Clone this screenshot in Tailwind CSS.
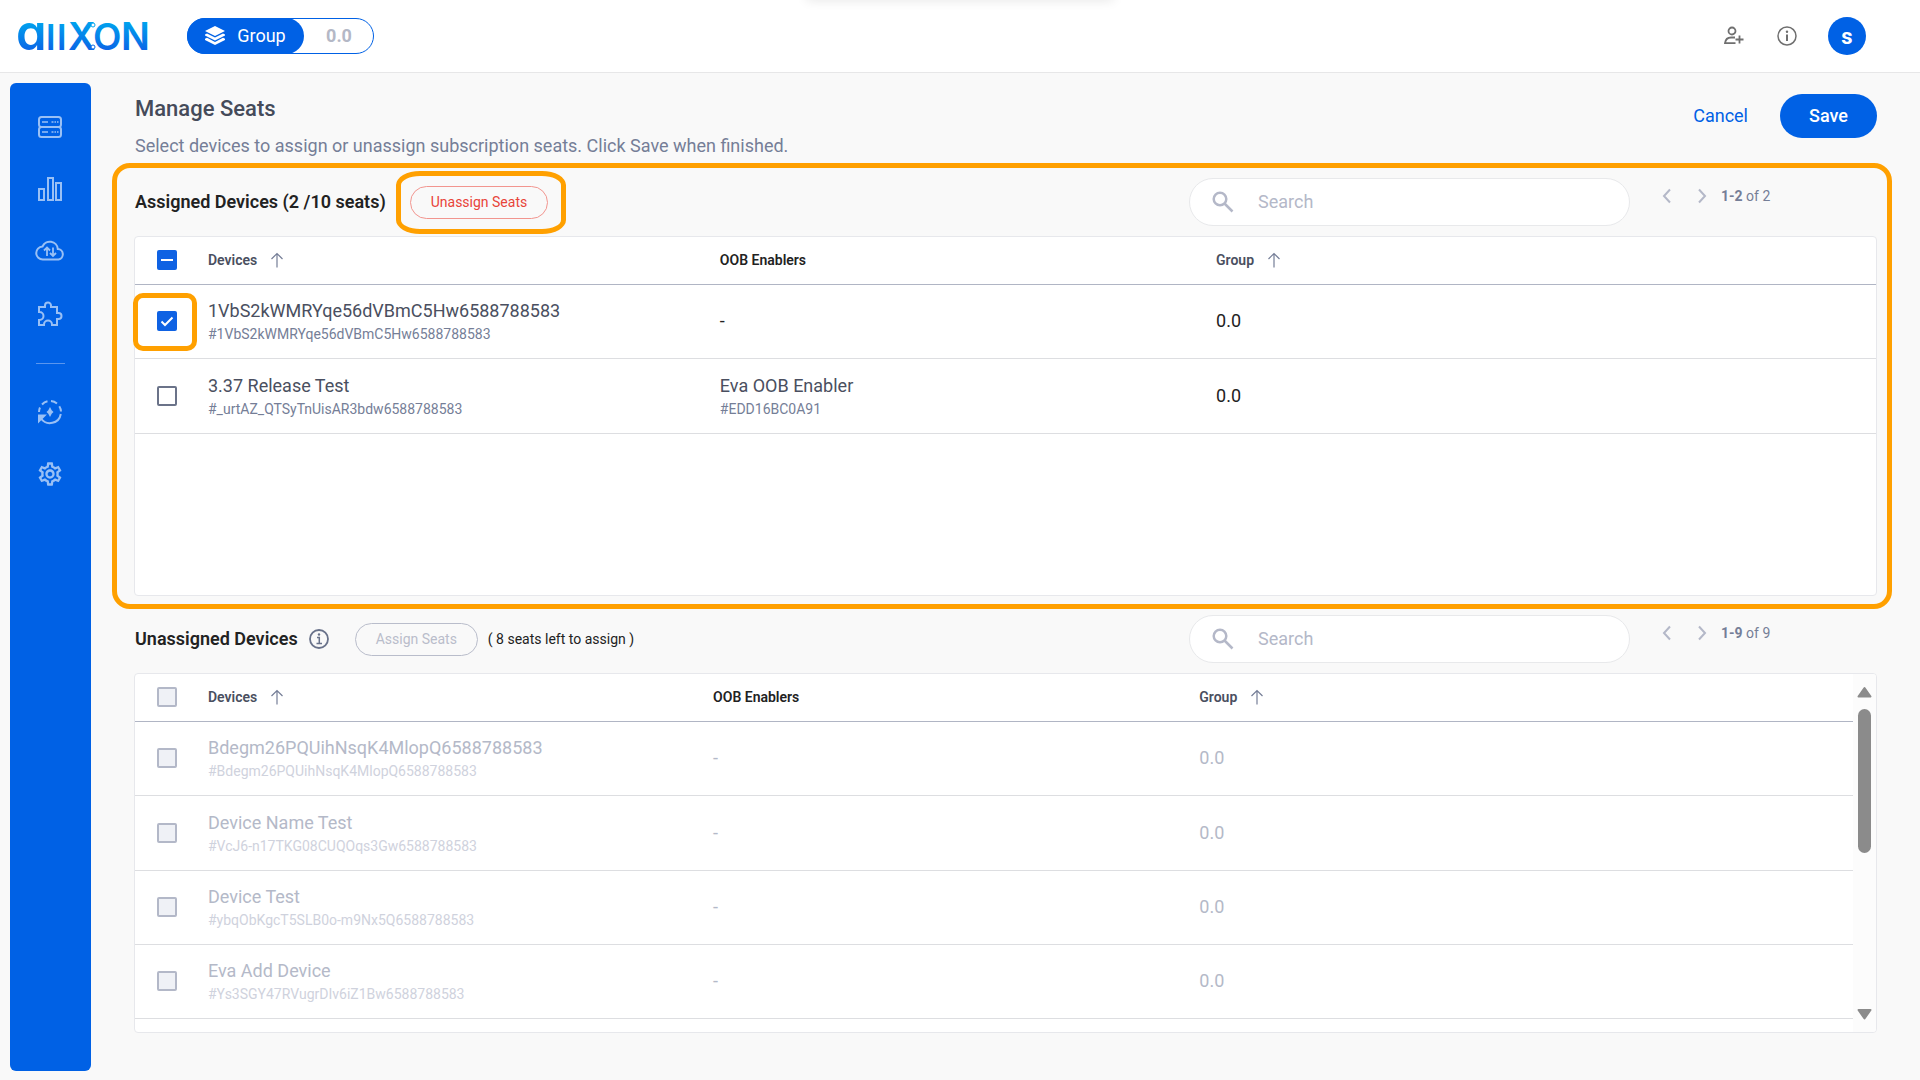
<!DOCTYPE html>
<html lang="en">
<head>
    <meta charset="UTF-8">
    <meta name="viewport" content="width=device-width, initial-scale=1.0">
    <title>Manage Seats</title>
    <script src="https://cdn.jsdelivr.net/npm/@tailwindcss/browser@4"></script>
</head>
<body class="bg-[#f9f9f9] font-[Roboto,sans-serif] text-[#222] min-h-screen flex flex-col">

    <!-- Top bar -->
    <header class="relative h-[73px] bg-white border-b border-[#e7e7e8] flex items-center pl-4 pr-[54px]">
        <div class="absolute -top-2 left-[42%] w-[16%] h-2 rounded shadow-[0_0_12px_rgba(0,0,0,0.12)]"></div>

        <a href="#" aria-label="allxon home">
            <svg width="140" height="72" viewBox="0 0 140 72" class="overflow-visible font-[Inter,sans-serif]">
                <defs>
                    <linearGradient id="logoFill" gradientUnits="userSpaceOnUse" x1="0" y1="22" x2="0" y2="50">
                        <stop offset="0" stop-color="#00a3ee"/>
                        <stop offset="1" stop-color="#0a66e6"/>
                    </linearGradient>
                </defs>
                <text y="50" fill="url(#logoFill)" font-weight="600"><tspan x="0" font-size="49" style="font-feature-settings:'cv11'">a</tspan><tspan x="30" font-size="36">l</tspan><tspan x="41" font-size="36">l</tspan><tspan x="52" font-size="38">X</tspan><tspan x="77" font-size="37">O</tspan><tspan x="105" font-size="38">N</tspan></text>
                <circle cx="77" cy="25" r="2" fill="#fff" stroke="#00a3ee" stroke-width="1"/>
                <circle cx="77" cy="47" r="2" fill="#fff" stroke="#0a66e6" stroke-width="1"/>
            </svg>
        </a>

        <div class="ml-[31px] h-9 w-[187px] rounded-full border border-[#0061e5] bg-white flex text-lg">
            <button class="-m-px h-9 w-[117px] rounded-full bg-[#0061e5] text-white flex items-center justify-center gap-3">
                <svg width="20" height="20" viewBox="0 0 20 20" fill="#fff">
                    <path d="M10 0l10 5-10 5L0 5z"/>
                    <path d="M0 8.400l2-1 8 4.200 8-4.200 2 1v1.200l-10 5-10-5z"/>
                    <path d="M0 12.800l2-1 8 4.200 8-4.200 2 1v1.200l-10 5-10-5z"/>
                </svg>
                Group
            </button>
            <button class="flex-1 pl-0.5 text-[#b4b8c6] font-bold">0.0</button>
        </div>

        <div class="ml-auto flex items-center">
            <button aria-label="Invite user">
                <svg width="20" height="20" viewBox="0 0 20 20" fill="none" stroke="#6f6f6f" stroke-width="1.800">
                    <circle cx="8" cy="5" r="3.500"/>
                    <path d="M11 11.500H7c-3.500 0-5.500 2-6 5.700h10.500M15.500 9.500v8M11.500 13.500h8"/>
                </svg>
            </button>
            <button aria-label="Information" class="ml-[33px]">
                <svg width="20" height="20" viewBox="0 0 20 20" fill="none" stroke="#6f6f6f" stroke-width="1.500">
                    <circle cx="10" cy="10" r="9"/>
                    <path d="M10 8.500v6.500" stroke-width="2"/>
                    <circle cx="10" cy="5.800" r="1.200" fill="#6f6f6f" stroke="none"/>
                </svg>
            </button>
            <button class="ml-[31px] size-[38px] rounded-full bg-[#0061e5] text-white text-[22px] font-bold">s</button>
        </div>
    </header>

    <div class="flex-1 flex">

        <!-- Sidebar -->
        <nav class="w-[81px] mt-2.5 ml-2.5 mb-[9px] pt-[30px] pr-px rounded-md bg-[#0061e5] text-[#99c0f5] flex flex-col items-center gap-[34px]">
            <a href="#" aria-label="Devices">
                <svg width="28" height="28" viewBox="0 0 28 28" fill="none" stroke="currentColor" stroke-width="2">
                    <rect x="3" y="4" width="22" height="10" rx="2.500"/>
                    <rect x="3" y="14" width="22" height="10" rx="2.500"/>
                    <path d="M6 9h6M15.500 9h2M18.500 9h1.500M21 9h1.500M6 19h6M15.500 19h2M18.500 19h1.500M21 19h1.500" stroke-width="1.300"/>
                </svg>
            </a>
            <a href="#" aria-label="Statistics">
                <svg width="28" height="28" viewBox="0 0 28 28" fill="none" stroke="currentColor" stroke-width="2">
                    <rect x="3" y="14" width="5" height="11"/>
                    <rect x="12" y="3" width="5" height="22"/>
                    <rect x="20" y="8" width="5" height="17"/>
                </svg>
            </a>
            <a href="#" aria-label="Cloud updates">
                <svg width="30" height="28" viewBox="0 0 30 28" fill="none" stroke="currentColor" stroke-width="2">
                    <path d="M8 22.500a6.500 6.500 0 0 1-.5-13A8 8 0 0 1 22.800 12a5.300 5.300 0 0 1 .7 10.500z"/>
                    <path d="M12 19v-8M9 13.500l3-3 3 3M18 10.500v8M15 16l3 3 3-3" stroke-width="1.800"/>
                </svg>
            </a>
            <a href="#" aria-label="Plugins" class="mt-0.5">
                <svg width="28" height="28" viewBox="-1 0 28 28" fill="none" stroke="currentColor" stroke-width="2">
                    <path d="M2 6H8V4.500a3 3 0 0 1 6 0V6H20V12h1.500a3 3 0 0 1 0 6H20V24H15v-.5a4 4 0 0 0-8 0V24H2V19h.5a4 4 0 0 0 0-8H2Z"/>
                </svg>
            </a>
            <hr class="w-[29px] border-[#5a96ee]">
            <a href="#" aria-label="Recovery">
                <svg width="28" height="28" viewBox="0 0 28 28" fill="none" stroke="currentColor" stroke-width="2">
                    <path d="M24.800 16A11 11 0 0 1 5 20.500"/>
                    <path d="M3 14a11 11 0 0 1 1-4.500M6 6.500A11 11 0 0 1 11.500 3.300M15 3a11 11 0 0 1 6 2.500M23.300 8.200A11 11 0 0 1 25 13.500"/>
                    <path d="M3 23v-5.500h5.500z" fill="currentColor"/>
                    <path d="M14 9l1.700 3.300L17.500 14l-1.800 1.700L14 19l-1.700-3.300L10.500 14l1.800-1.700z" fill="currentColor" stroke="none"/>
                </svg>
            </a>
            <a href="#" aria-label="Settings">
                <svg width="28" height="28" viewBox="0 0 24 24" fill="currentColor">
                    <path d="M19.430 12.980c.04-.32.07-.64.07-.98 0-.34-.03-.66-.07-.98l2.110-1.650c.19-.15.24-.42.12-.64l-2-3.460c-.09-.16-.26-.25-.44-.25-.06 0-.12.01-.17.03l-2.490 1c-.52-.4-1.080-.73-1.690-.98l-.38-2.650C14.460 2.180 14.250 2 14 2h-4c-.25 0-.46.18-.49.42l-.38 2.650c-.61.25-1.170.59-1.690.98l-2.490-1c-.06-.02-.12-.03-.18-.03-.17 0-.34.09-.43.25l-2 3.460c-.13.22-.07.49.12.64l2.110 1.650c-.04.32-.07.65-.07.98 0 .33.03.66.07.98l-2.110 1.650c-.19.15-.24.42-.12.64l2 3.460c.09.16.26.25.44.25.06 0 .12-.01.17-.03l2.490-1c.52.4 1.080.73 1.690.98l.38 2.650c.03.24.24.42.49.42h4c.25 0 .46-.18.49-.42l.38-2.650c.61-.25 1.170-.59 1.690-.98l2.490 1c.06.02.12.03.18.03.17 0 .34-.09.43-.25l2-3.460c.12-.22.07-.49-.12-.64l-2.110-1.650zm-1.980-1.710c.04.31.05.52.05.73 0 .21-.02.43-.05.73l-.14 1.130.89.7 1.080.84-.7 1.210-1.270-.51-1.040-.42-.9.68c-.43.32-.84.56-1.250.73l-1.060.43-.16 1.130-.2 1.350h-1.400l-.19-1.350-.16-1.130-1.060-.43c-.43-.18-.83-.41-1.230-.71l-.91-.7-1.060.43-1.270.51-.7-1.210 1.080-.84.89-.7-.14-1.130c-.03-.31-.05-.54-.05-.74s.02-.43.05-.73l.14-1.130-.89-.7-1.080-.84.7-1.210 1.270.51 1.040.42.9-.68c.43-.32.84-.56 1.250-.73l1.060-.43.16-1.130.2-1.350h1.390l.19 1.350.16 1.130 1.060.43c.43.18.83.41 1.230.71l.91.7 1.060-.43 1.270-.51.7 1.210-1.070.85-.89.7.14 1.130zM12 8c-2.210 0-4 1.790-4 4s1.790 4 4 4 4-1.790 4-4-1.790-4-4-4zm0 6c-1.100 0-2-.9-2-2s.9-2 2-2 2 .9 2 2-.9 2-2 2z"/>
                </svg>
            </a>
        </nav>

        <main class="flex-1 px-[43px] pt-5">

            <!-- Page title -->
            <div class="flex justify-between items-start pl-px">
                <div>
                    <h1 class="text-[22px] leading-8 font-medium text-[#454b5a]">Manage Seats</h1>
                    <p class="mt-[7px] text-lg leading-7 text-[#757e97]">Select devices to assign or unassign subscription seats. Click Save when finished.</p>
                </div>
                <div class="flex items-center gap-8 mt-px text-lg">
                    <button class="text-[#0061e5]">Cancel</button>
                    <button class="h-11 w-[97px] rounded-full bg-[#0061e5] text-white font-medium">Save</button>
                </div>
            </div>

            <!-- Assigned devices -->
            <section class="relative mt-[18px]">
                <div class="flex items-center h-12 pl-px">
                    <h2 class="text-lg font-semibold">Assigned Devices (2 /10 seats)</h2>
                    <div class="relative ml-6">
                        <button class="h-[33px] px-5 rounded-full border border-[#f2958f] text-sm text-[#e8443a] flex items-center">Unassign Seats</button>
                        <span class="absolute -left-3.5 -right-[18px] -inset-y-[15px] border-5 border-[#ffa000] rounded-[24px/14px] pointer-events-none"></span>
                    </div>
                    <label class="ml-auto w-[441px] h-12 rounded-full border border-[#e8e9eb] bg-white flex items-center pl-[22px]">
                        <svg width="22" height="22" viewBox="0 0 22 22" fill="none" stroke="#b4b8c8" stroke-width="2.500">
                            <circle cx="8" cy="8" r="6.300"/>
                            <path d="M12.500 12.500l8 8"/>
                        </svg>
                        <input type="text" placeholder="Search" aria-label="Search assigned devices" class="ml-6 flex-1 text-lg outline-none placeholder:text-[#b4b8c8]">
                    </label>
                    <div class="w-[247px] pl-8 mb-3 flex items-center text-[#757e97]">
                        <button aria-label="Previous page"><svg width="10" height="16" viewBox="0 0 10 16" fill="none" stroke="#b4b8c8" stroke-width="2"><path d="M8 1.500L2 8l6 6.500"/></svg></button>
                        <button aria-label="Next page" class="ml-[25px]"><svg width="10" height="16" viewBox="0 0 10 16" fill="none" stroke="#b4b8c8" stroke-width="2"><path d="M2 1.500L8 8l-6 6.500"/></svg></button>
                        <span class="ml-3.5 text-sm"><b>1-2</b> of 2</span>
                    </div>
                </div>

                <div class="mt-2.5 h-[360px] bg-white border border-[#e7e8ec] rounded">
                    <table class="w-full table-fixed text-left">
                        <thead>
                            <tr class="h-[47px] border-b border-[#b0b5c4] text-sm">
                                <th class="w-[73px] pl-[22px]">
                                    <label class="grid size-5">
                                        <input type="checkbox" aria-label="Select all assigned devices" class="col-start-1 row-start-1 appearance-none size-5 rounded-xs bg-[#0f62e3]">
                                        <svg class="col-start-1 row-start-1" width="20" height="20" viewBox="0 0 20 20" stroke="#fff" stroke-width="2"><path d="M4 10h12"/></svg>
                                    </label>
                                </th>
                                <th class="w-[29.4%] font-semibold text-[#4a4f60]">
                                    <button class="flex items-center gap-3.5">Devices
                                        <svg width="12" height="16" viewBox="0 0 12 16" fill="none" stroke="#757e97" stroke-width="1.200"><path d="M6 15.500V1.500M.5 7L6 1.500 11.500 7"/></svg>
                                    </button>
                                </th>
                                <th class="w-[28.5%] font-semibold">OOB Enablers</th>
                                <th class="font-semibold text-[#4a4f60]">
                                    <button class="flex items-center gap-3.5">Group
                                        <svg width="12" height="16" viewBox="0 0 12 16" fill="none" stroke="#757e97" stroke-width="1.200"><path d="M6 15.500V1.500M.5 7L6 1.500 11.500 7"/></svg>
                                    </button>
                                </th>
                            </tr>
                        </thead>
                        <tbody class="text-lg">
                            <tr class="h-[74px] border-b border-[#dddee1]">
                                <td class="pl-[22px]">
                                    <label class="relative grid size-5">
                                        <input type="checkbox" checked aria-label="Select 1VbS2kWMRYqe56dVBmC5Hw6588788583" class="col-start-1 row-start-1 appearance-none size-5 rounded-xs bg-[#0f62e3]">
                                        <svg class="col-start-1 row-start-1" width="20" height="20" viewBox="0 0 20 20" fill="none" stroke="#fff" stroke-width="2"><path d="M4.500 10.500l3.500 3.500 7.500-7.500"/></svg>
                                        <span class="absolute -left-6 -right-5 -top-[18px] -bottom-5 border-5 border-[#ffa000] rounded-[10px] pointer-events-none"></span>
                                    </label>
                                </td>
                                <td>
                                    <div class="leading-[26px] text-[#4a4f60]">1VbS2kWMRYqe56dVBmC5Hw6588788583</div>
                                    <div class="text-sm text-[#757e97]">#1VbS2kWMRYqe56dVBmC5Hw6588788583</div>
                                </td>
                                <td>-</td>
                                <td>0.0</td>
                            </tr>
                            <tr class="h-[75px] border-b border-[#dddee1]">
                                <td class="pl-[22px]"><input type="checkbox" aria-label="Select 3.37 Release Test" class="block appearance-none size-5 rounded-xs border-2 border-[#6b7389]"></td>
                                <td>
                                    <div class="leading-[26px] text-[#4a4f60]">3.37 Release Test</div>
                                    <div class="text-sm text-[#757e97]">#_urtAZ_QTSyTnUisAR3bdw6588788583</div>
                                </td>
                                <td>
                                    <div class="leading-[26px] text-[#4a4f60]">Eva OOB Enabler</div>
                                    <div class="text-sm text-[#757e97]">#EDD16BC0A91</div>
                                </td>
                                <td>0.0</td>
                            </tr>
                        </tbody>
                    </table>
                </div>

                <!-- Highlight round the whole section -->
                <div class="absolute -top-[15px] -left-[22px] -right-[15px] -bottom-[13px] border-5 border-[#ffa000] rounded-[18px] pointer-events-none"></div>
            </section>

            <!-- Unassigned devices -->
            <section class="mt-[19px]">
                <div class="flex items-center h-12 pl-px">
                    <h2 class="text-lg font-semibold">Unassigned Devices</h2>
                    <button aria-label="About unassigned devices" class="ml-[11px]">
                        <svg width="20" height="20" viewBox="0 0 20 20" fill="none" stroke="#69728a" stroke-width="1.800">
                            <circle cx="10" cy="10" r="9"/>
                            <path d="M8 8.500h2.300V14.500M7.500 14.500h5.500" stroke-width="1.500"/>
                            <circle cx="10" cy="5.500" r="1.200" fill="#69728a" stroke="none"/>
                        </svg>
                    </button>
                    <button disabled class="ml-[26px] h-[33px] px-5 rounded-full border border-[#b9bdcb] text-sm text-[#b9bdcb]">Assign Seats</button>
                    <span class="ml-2.5 text-sm">( 8 seats left to assign )</span>
                    <label class="ml-auto w-[441px] h-12 rounded-full border border-[#e8e9eb] bg-white flex items-center pl-[22px]">
                        <svg width="22" height="22" viewBox="0 0 22 22" fill="none" stroke="#b4b8c8" stroke-width="2.500">
                            <circle cx="8" cy="8" r="6.300"/>
                            <path d="M12.500 12.500l8 8"/>
                        </svg>
                        <input type="text" placeholder="Search" aria-label="Search unassigned devices" class="ml-6 flex-1 text-lg outline-none placeholder:text-[#b4b8c8]">
                    </label>
                    <div class="w-[247px] pl-8 mb-3 flex items-center text-[#757e97]">
                        <button aria-label="Previous page"><svg width="10" height="16" viewBox="0 0 10 16" fill="none" stroke="#b4b8c8" stroke-width="2"><path d="M8 1.500L2 8l6 6.500"/></svg></button>
                        <button aria-label="Next page" class="ml-[25px]"><svg width="10" height="16" viewBox="0 0 10 16" fill="none" stroke="#b4b8c8" stroke-width="2"><path d="M2 1.500L8 8l-6 6.500"/></svg></button>
                        <span class="ml-3.5 text-sm"><b>1-9</b> of 9</span>
                    </div>
                </div>

                <div class="mt-2.5 h-[360px] bg-white border border-[#e7e8ec] rounded flex overflow-hidden">
                    <div class="flex-1">
                        <table class="w-full table-fixed text-left">
                            <thead>
                                <tr class="h-[47px] border-b border-[#b0b5c4] text-sm">
                                    <th class="w-[73px] pl-[22px]"><input type="checkbox" disabled aria-label="Select all unassigned devices" class="block appearance-none size-5 rounded-xs border-2 border-[#b3b8c8] bg-[#eff1f6]"></th>
                                    <th class="w-[29.4%] font-semibold text-[#4a4f60]">
                                        <button class="flex items-center gap-3.5">Devices
                                            <svg width="12" height="16" viewBox="0 0 12 16" fill="none" stroke="#757e97" stroke-width="1.200"><path d="M6 15.500V1.500M.5 7L6 1.500 11.500 7"/></svg>
                                        </button>
                                    </th>
                                    <th class="w-[28.3%] font-semibold">OOB Enablers</th>
                                    <th class="font-semibold text-[#4a4f60]">
                                        <button class="flex items-center gap-3.5">Group
                                            <svg width="12" height="16" viewBox="0 0 12 16" fill="none" stroke="#757e97" stroke-width="1.200"><path d="M6 15.500V1.500M.5 7L6 1.500 11.500 7"/></svg>
                                        </button>
                                    </th>
                                </tr>
                            </thead>
                            <tbody class="text-lg text-[#b4b9c8]">
                                <tr class="h-[74px] border-b border-[#dddee1]">
                                    <td class="pl-[22px]"><input type="checkbox" disabled aria-label="Select Bdegm26PQUihNsqK4MlopQ6588788583" class="block appearance-none size-5 rounded-xs border-2 border-[#b3b8c8] bg-[#eff1f6]"></td>
                                    <td>
                                        <div class="leading-[26px]">Bdegm26PQUihNsqK4MlopQ6588788583</div>
                                        <div class="text-sm text-[#cfd2dd]">#Bdegm26PQUihNsqK4MlopQ6588788583</div>
                                    </td>
                                    <td>-</td>
                                    <td>0.0</td>
                                </tr>
                                <tr class="h-[75px] border-b border-[#dddee1]">
                                    <td class="pl-[22px]"><input type="checkbox" disabled aria-label="Select Device Name Test" class="block appearance-none size-5 rounded-xs border-2 border-[#b3b8c8] bg-[#eff1f6]"></td>
                                    <td>
                                        <div class="leading-[26px]">Device Name Test</div>
                                        <div class="text-sm text-[#cfd2dd]">#VcJ6-n17TKG08CUQOqs3Gw6588788583</div>
                                    </td>
                                    <td>-</td>
                                    <td>0.0</td>
                                </tr>
                                <tr class="h-[74px] border-b border-[#dddee1]">
                                    <td class="pl-[22px]"><input type="checkbox" disabled aria-label="Select Device Test" class="block appearance-none size-5 rounded-xs border-2 border-[#b3b8c8] bg-[#eff1f6]"></td>
                                    <td>
                                        <div class="leading-[26px]">Device Test</div>
                                        <div class="text-sm text-[#cfd2dd]">#ybqObKgcT5SLB0o-m9Nx5Q6588788583</div>
                                    </td>
                                    <td>-</td>
                                    <td>0.0</td>
                                </tr>
                                <tr class="h-[74px] border-b border-[#dddee1]">
                                    <td class="pl-[22px]"><input type="checkbox" disabled aria-label="Select Eva Add Device" class="block appearance-none size-5 rounded-xs border-2 border-[#b3b8c8] bg-[#eff1f6]"></td>
                                    <td>
                                        <div class="leading-[26px]">Eva Add Device</div>
                                        <div class="text-sm text-[#cfd2dd]">#Ys3SGY47RVugrDIv6iZ1Bw6588788583</div>
                                    </td>
                                    <td>-</td>
                                    <td>0.0</td>
                                </tr>
                            </tbody>
                        </table>
                    </div>

                    <!-- Scrollbar -->
                    <div class="w-[23px] bg-[#fcfcfc] flex flex-col items-center py-3">
                        <svg width="15" height="12" viewBox="0 0 15 12" fill="#8b8b8b" stroke="#8b8b8b" stroke-width="2" stroke-linejoin="round"><path d="M7.500 2L13.500 10.500h-12z"/></svg>
                        <div class="mt-[11px] w-[13px] h-36 rounded-full bg-[#8b8b8b]"></div>
                        <svg class="mt-auto" width="15" height="12" viewBox="0 0 15 12" fill="#8b8b8b" stroke="#8b8b8b" stroke-width="2" stroke-linejoin="round"><path d="M7.500 10.500L13.500 2h-12z"/></svg>
                    </div>
                </div>
            </section>
        </main>
    </div>
</body>
</html>
